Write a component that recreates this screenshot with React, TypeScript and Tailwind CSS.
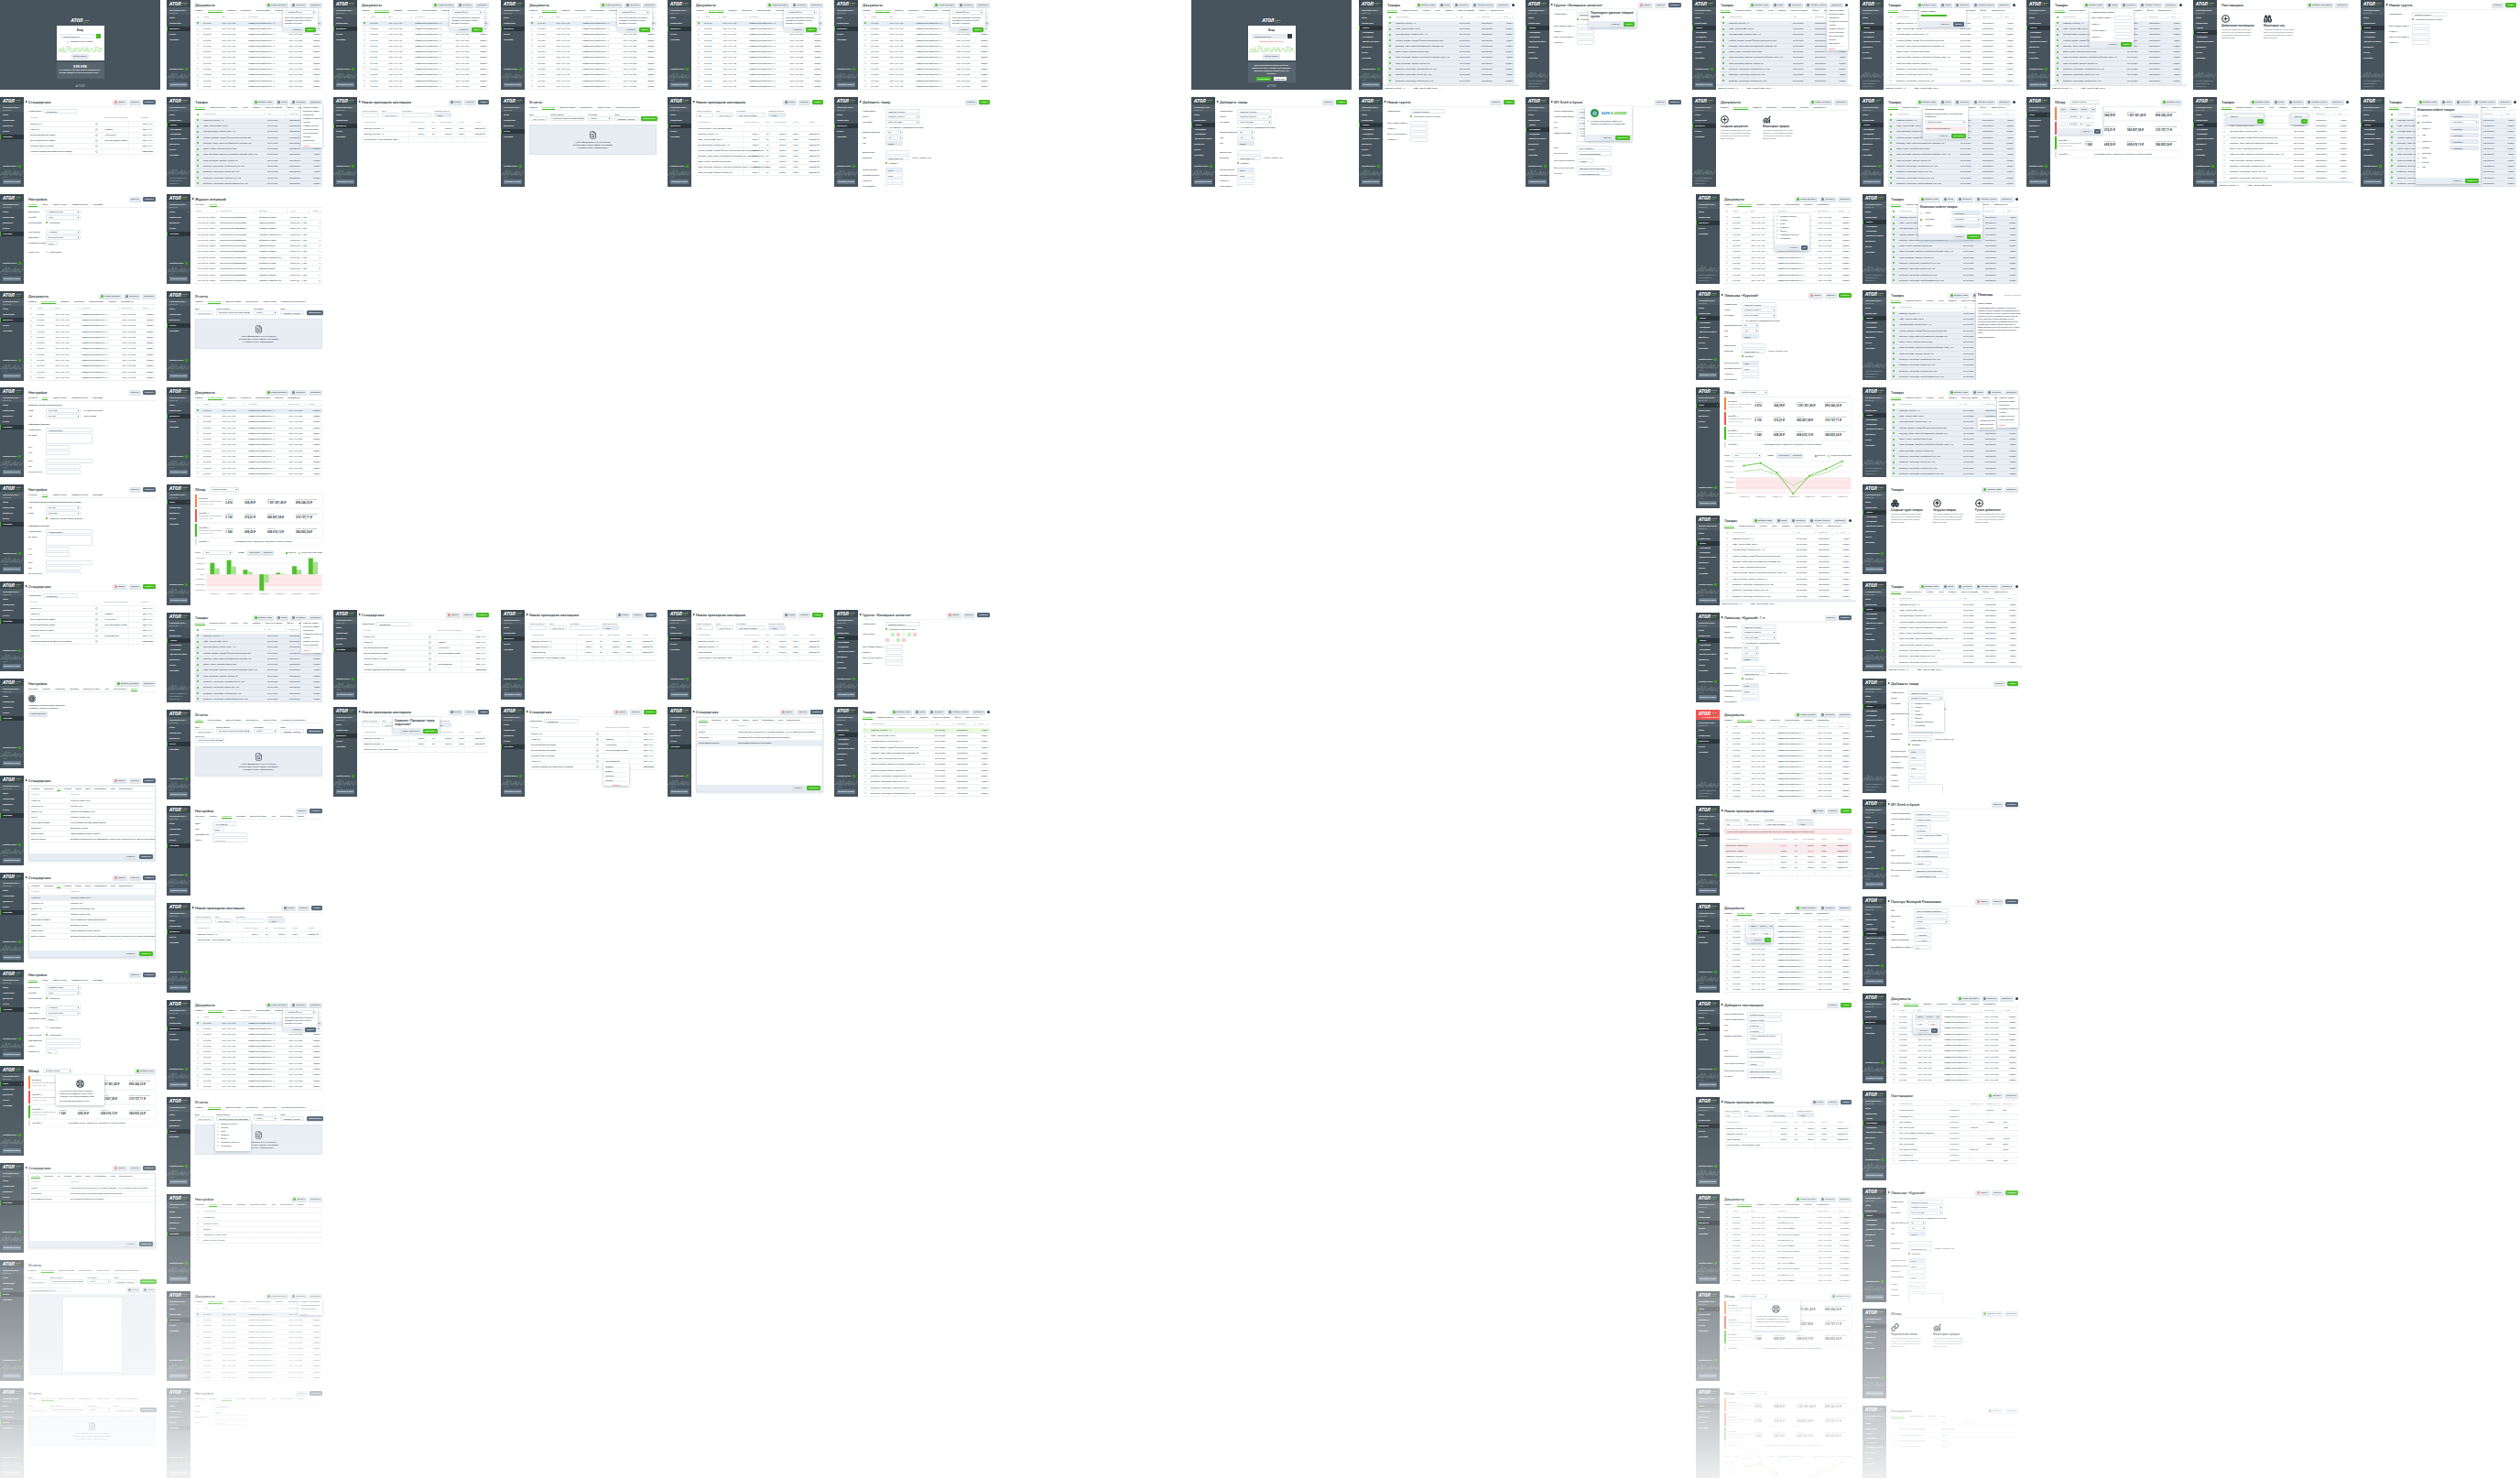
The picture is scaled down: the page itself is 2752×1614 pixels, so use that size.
import React from "react";
import { FileText, LifeBuoy, CirclePlus, CircleArrowUp, Boxes, Link, Binoculars, ChartNoAxesCombined, Copyright, Building2 } from "lucide-react";

type Kids = { children?: React.ReactNode };

/* ---------- small controls ---------- */

const btnKinds = {
  plain: "bg-[#eef2f6] text-[#34404a] border-[#dde4ea]",
  dark: "bg-[#566878] text-white border-[#566878]",
  green: "bg-[#43bd1f] text-white border-[#43bd1f]",
};

function Btn({ kind = "plain", dot, children, className = "" }: Kids & { kind?: keyof typeof btnKinds; dot?: string; className?: string }) {
  return (
    <button className={`flex h-[5px] shrink-0 items-center justify-center gap-px rounded-[1px] border px-px font-medium shadow-[0_1px_1px_#dde3e9] ${btnKinds[kind]} ${className}`}>
      {dot && <span className={`size-[3px] rounded-full ${dot}`} />}
      {children}
    </button>
  );
}

function Tick({ on, label }: { on?: boolean; label: string }) {
  return (
    <input
      type="checkbox"
      aria-label={label}
      defaultChecked={on}
      className="block size-[2px] shrink-0 appearance-none rounded-full bg-[#d3dae0] checked:bg-[#43bd1f]"
    />
  );
}

const box = "block h-[5px] rounded-[1px] border border-[#dfe6ed] px-[2px] text-[2px] leading-[3px] font-medium text-[#3f4a53]";

function Box({ v, label, w = "w-[38px]", k = "input" }: { v: string; label: string; w?: string; k?: string }) {
  if (k === "select")
    return (
      <span className={`relative block shrink-0 ${w}`}>
        <select aria-label={label} className={`${box} w-full appearance-none bg-white`}>
          <option>{v}</option>
        </select>
        <span className="pointer-events-none absolute top-[2px] right-[2px] size-px bg-[#56636e]" />
      </span>
    );
  if (k === "area")
    return <textarea aria-label={label} defaultValue={v} className={`${box} h-[12px] resize-none overflow-hidden ${w}`} />;
  if (k === "green") return <input aria-label={label} defaultValue={v} className={`${box} shrink-0 border-[#9fd98b] bg-[#f9fdf7] ${w}`} />;
  return <input aria-label={label} defaultValue={v} className={`${box} shrink-0 ${k === "off" ? "bg-[#e6edf3]" : "bg-white"} ${w}`} />;
}

function Popup({ className = "", children, footer }: Kids & { className?: string; footer?: React.ReactNode }) {
  return (
    <div className={`absolute z-10 flex flex-col bg-white shadow-[0_1px_3px_#aeb9c4] ${className}`}>
      <div className="flex grow flex-col gap-[2px] p-[2px]">{children}</div>
      {footer && <div className="flex h-[7px] shrink-0 items-center justify-end gap-[2px] bg-[#e9eef4] px-[2px]">{footer}</div>}
    </div>
  );
}

/* ---------- sidebar and shell ---------- */

function Logo() {
  return (
    <span className="flex items-center gap-px">
      <b className="text-[5px] leading-[5px] font-black text-white italic">АТОЛ</b>
      <span className="text-[2px] leading-[2px] text-[#c6ced4]">
        Frontol
        <br />
        <span className="font-bold text-[#43bd1f]">xPOS</span>
      </span>
    </span>
  );
}

const skyline = "M0 6h2v-1h1v-2h1v3h2V1h1v5h2V2l1-1 1 1v4h2V4h2v2h1V2h1v4h2V3h2v3h2l2-4";
const menu = ["Обзор", "Справочники", "Документы", "Отчеты", "Настройки"];
const submenu = ["Товары", "Поставщики", "Сотрудники", "Дисконтные карты"];

type Side = { active?: number; sub?: number; red?: boolean; foot?: boolean; user?: string; alert?: boolean };

function Sidebar({ active = 2, sub = -1, red, foot, user = "Константин Конст…", alert }: Side) {
  return (
    <aside className="flex w-[26px] shrink-0 flex-col overflow-hidden bg-[#47545d] text-[2px] text-white">
      <div className={`flex shrink-0 flex-col justify-center pl-[3px] ${red ? "h-[11px] bg-[#f25555]" : "h-[8px] bg-[#3e4a52]"}`}>
        <Logo />
        {red && <span className="pl-[4px]">Нет связи с кассой</span>}
      </div>
      <div className="h-[8px] shrink-0 bg-[#515e67] px-[3px] pt-[2px]">
        <p className="truncate font-bold">{user}</p>
        <p className="text-[#a9b4bc]">Директор</p>
      </div>
      <nav className="flex flex-col font-bold">
        {menu.map((m, i) => (
          <React.Fragment key={m}>
            <a
              href="#"
              className={`mt-px flex h-[5px] items-center justify-between border-l pr-[2px] pl-[2px] ${i === active && sub < 0 ? "border-[#43bd1f] bg-[#2c363d]" : "border-transparent"}`}
            >
              {m}
              {alert && i === 0 && <span className="size-px bg-[#ff6a3c]" />}
            </a>
            {i === 1 && sub >= 0 &&
              submenu.map((s, j) => (
                <a key={s} href="#" className={`flex h-[5px] items-center border-l pl-[3px] ${j === sub ? "border-[#43bd1f] bg-[#2c363d]" : "border-transparent"}`}>
                  {s}
                </a>
              ))}
          </React.Fragment>
        ))}
      </nav>
      <div className="mt-auto shrink-0">
        {!foot && (
          <a href="#" className="flex items-center justify-between px-[3px] font-bold">
            Перейти в кассу
            <span className="size-[3px] bg-[#2f9c1c]" />
          </a>
        )}
        <svg viewBox="0 0 26 7" className="mt-[2px] h-[7px] w-full" fill="none" stroke="#7c8992" strokeWidth=".6">
          <path d={skyline} />
        </svg>
        {foot ? (
          <p className="h-[13px] px-[3px] pt-[2px] text-[#a0acb4]">
            Служба поддержки
            <br />
            support@atol.ru
            <br />
            Версия 2.0.1
          </p>
        ) : (
          <>
            <p className="px-[3px] text-[#93a0a9]">v.2.0.1</p>
            <button className="mx-[3px] mt-px mb-[3px] block h-[5px] w-[20px] bg-[#67798a] text-white">Выгрузить в кассу</button>
          </>
        )}
      </div>
    </aside>
  );
}

type ShellProps = Kids & Side & { title: string; back?: boolean; actions?: React.ReactNode; lead?: React.ReactNode; tabs?: string[]; tab?: number; footer?: boolean };

function Shell({ title, back, actions, lead, tabs, tab = 0, footer, children, ...side }: ShellProps) {
  return (
    <>
      <Sidebar {...side} />
      <main className="flex min-w-0 grow flex-col overflow-hidden">
        <div className="flex grow flex-col overflow-hidden px-[5px]">
          <header className="relative flex h-[10px] shrink-0 items-center gap-[4px]">
            {back && <a href="#" aria-label="Назад" className="absolute -left-[3px] size-[2px] rotate-45 border-b border-l border-[#47535c]" />}
            <h2 className="text-[4px] leading-[5px] font-medium text-[#2b3740]">{title}</h2>
            {lead}
            <span className="ml-auto flex gap-[2px]">{actions}</span>
          </header>
          {tabs ? (
            <nav className="flex h-[5px] shrink-0 gap-[5px] border-b border-[#edf0f3]">
              {tabs.map((t, i) => (
                <a key={t} href="#" className={i === tab ? "border-b border-[#43bd1f] text-[#43bd1f]" : ""}>
                  {t}
                </a>
              ))}
            </nav>
          ) : (
            <div className="h-px shrink-0 bg-[#f1f3f5]" />
          )}
          {children}
        </div>
        {footer && (
          <footer className="flex h-[5px] shrink-0 items-center gap-[4px] border-t border-[#dfe5ea] px-[2px] shadow-[0_-1px_1px_#eef1f4]">
            <span>Лимонад «Курский» 1 л</span>
            <span>×</span>
            <span>Кофе «Черный Кофе» 250 гр</span>
            <span>×</span>
          </footer>
        )}
      </main>
    </>
  );
}

const plus = "bg-[#43bd1f]";
const grey = "bg-[#77848f]";
const red = "bg-[#f58a8a]";

const save = (label = "Сохранить", kind: "dark" | "green" = "dark", del = false) => (
  <>
    {del && <Btn dot={red}>Удалить</Btn>}
    <Btn>Отменить</Btn>
    <Btn kind={kind}>{label}</Btn>
  </>
);

/* ---------- list screens ---------- */

function HeadCells({ cols, mark }: { cols: [string, string][]; mark?: boolean }) {
  return (
    <thead>
      <tr className="h-[8px]">
        {mark !== undefined && (
          <th className="w-[8px] pl-[2px]">
            <Tick on={mark} label="Выбрать все" />
          </th>
        )}
        {cols.map(([c, w]) => (
          <th key={c} className={`p-0 pr-px font-normal text-[#8b959e] ${w}`}>
            <span className="flex justify-between border-b border-[#edf0f3] px-px">
              {c}
              <span>▾</span>
            </span>
          </th>
        ))}
      </tr>
    </thead>
  );
}

const docTabs = ["Продажи", "Приёмки товаров", "Возвраты", "Переоценка", "Инвентаризация", "Списания", "Перемещения"];
const docCols: [string, string][] = [["Номер", "w-[20px]"], ["Дата", "w-[29px]"], ["Контрагент", "w-[44px]"], ["Дата оплаты", "w-[22px]"], ["Сумма", ""]];

function Docs({ sel, varied, extra, children, ...side }: Kids & Side & { sel?: boolean; varied?: boolean; extra?: boolean }) {
  const names = ["ООО «Лента Мир Продукт»", "ИП Лавренко Б. Ю.", "ЗАО «Агро Комфорт»"];
  return (
    <Shell
      title="Документы"
      active={2}
      tabs={docTabs}
      tab={1}
      {...side}
      actions={
        <>
          <Btn dot={plus}>Создать документ</Btn>
          <Btn dot={grey}>Выгрузить</Btn>
          <Btn>Действия ▾</Btn>
          {extra && <span className="size-[3px] self-center rounded-full bg-[#34404a]" />}
        </>
      }
    >
      <table className="h-[83px] w-full table-fixed border-collapse text-left">
        <HeadCells mark={false} cols={docCols} />
        <tbody>
          {Array.from({ length: 12 }, (_, i) => (
            <tr key={i} className={`border-b border-[#eceff2] ${sel && i === 0 ? "bg-[#e7edf4]" : ""}`}>
              <td className="pl-[2px]">
                <Tick on={sel && i === 0} label={`Документ ${i + 1}`} />
              </td>
              <td className="pl-px">АТ10-001</td>
              <td className="pl-px">18.04.17 в 14:20</td>
              <td className="pl-px">{varied ? names[i % 3] : "Коммерческие маркетинг С. А."}</td>
              <td className="pl-px">18.04.17 в 15:00</td>
              <td className="pr-[2px] text-right font-bold">{varied ? "34 158,00 ₽" : i ? "100,00 ₽" : "1 100,00 ₽"}</td>
            </tr>
          ))}
        </tbody>
      </table>
      {children}
    </Shell>
  );
}

function DocsDelete({ kind = "green" }: { kind?: "green" | "dark" }) {
  return (
    <Docs sel>
      <Popup
        className="top-[9px] left-[127px] h-[23px] w-[38px]"
        footer={
          <>
            <Btn>Отменить</Btn>
            <Btn kind={kind}>Удалить</Btn>
          </>
        }
      >
        <Box v="Приёмка №АТ-01" label="Документ" w="w-full" k="select" />
        <p className="whitespace-normal">Если у вас в магазине несколько накладных, выберите нужный документ из списка</p>
      </Popup>
    </Docs>
  );
}

const goods = [
  "Лимонад «Курский» 1 л",
  "Кофе «Черный Кофе» 250 гр",
  "Тесто для пиццы «Молоко Село» 1 кг",
  "Колбаса «Дымов» Салями Финская полукопчёная 350г",
  "Шоколад «Чайка» молочный лимонный с орехами 120г",
  "Масло «Рапсо» Рапсовое горячее 800г",
  "Каша «Быстрова» Овсяная с клубникой и яблоком «Люкс» 15г",
  "Каша «Быстрова» Овсяная Черника 40г",
  "Биойогурт «ЖизньМед» натуральный 3,2% 125г",
  "Биойогурт «ЖизньМед» Персик 2,5% 125г",
  "Биойогурт «ЖизньМед» Клубника 2,5% 125г",
  "Биойогурт «ЖизньМед» Голубика-малина 2,5% 125г",
];
const goodTabs = ["Все группы", "Холодные напитки", "Колбасы", "Сыры", "Сладости", "Молочные изделия", "Фрукты", "Замороженные"];
const goodCols: [string, string][] = [["Наименование", "w-[70px]"], ["Код", "w-[24px]"], ["Штрихкод", "w-[24px]"], ["Цена", ""]];

function Goods({ all, first, many, footer, children, ...side }: Kids & Side & { all?: boolean; first?: boolean; many?: boolean; footer?: boolean }) {
  return (
    <Shell
      title="Товары"
      active={1}
      sub={0}
      tabs={goodTabs}
      footer={footer}
      {...side}
      actions={
        <>
          <Btn dot={plus}>Добавить товар</Btn>
          <Btn dot={grey}>Группа</Btn>
          <Btn dot={grey}>Выгрузить</Btn>
          {many && <Btn dot={grey}>Обновить остатки</Btn>}
          <Btn>Действия ▾</Btn>
          {many && <span className="size-[3px] self-center rounded-full bg-[#34404a]" />}
        </>
      }
    >
      <table className="h-[83px] w-full shrink-0 table-fixed border-collapse text-left">
        <HeadCells mark={!!all} cols={goodCols} />
        <tbody>
          {goods.map((g, i) => (
            <tr key={g} className={`border-b ${all ? "border-[#dce3ea] bg-[#e9eef5]" : "border-[#eceff2]"} ${first && i === 0 ? "bg-[#e8f9de]" : ""}`}>
              <td className="pl-[2px]">
                <Tick on={all} label={g} />
              </td>
              <td className="pl-px">{g}</td>
              <td className="pl-px">0013249983</td>
              <td className="pl-px">02579870721</td>
              <td className="pr-[2px] text-right font-bold">{i % 3 ? "175,00 ₽" : "75,00 ₽"}</td>
            </tr>
          ))}
        </tbody>
      </table>
      {children}
    </Shell>
  );
}

const longMenu = ["Изменить товары", "Выгрузить товары", "Переоценка", "Объединить карточки", "Экспорт", "Создать этикетки"];

function ActionMenu({ items, className, last = "Удалить" }: { items: string[]; className: string; last?: string }) {
  return (
    <div className={`absolute z-10 flex flex-col gap-[2px] bg-white p-[2px] shadow-[0_1px_3px_#aeb9c4] ${className}`}>
      {items.map((m) => (
        <a key={m} href="#" className="leading-[2px]">
          {m}
        </a>
      ))}
      {last && (
        <a href="#" className="mt-auto border-t border-[#eceff2] pt-px text-[#f25555]">
          {last}
        </a>
      )}
    </div>
  );
}

/* ---------- tables with bordered cells ---------- */

const stdTabs = ["Основные", "Налоговые", "Чек", "Позиция", "Оплата", "Смена", "Оборудование", "Касса", "Дополнительно"];

function Standard({ green, rows = 6, dropdown }: { green?: boolean; rows?: number; dropdown?: boolean }) {
  const names = ["Закрыть чек", "Новый чек", "Быстрое добавление товара", "Быстрое добавление товара", "Показать баланс на экране", "Новый чек"];
  const extra = ["", "Продажа", "НАСТРОЙКИ", "Штучная продажа товара", "", "Без параметров"];
  const list = [...names.slice(0, rows - 1), "Нажмите сюда для поиска функции из команды"];
  return (
    <Shell title="Стандартная" back active={4} actions={save("Сохранить", green ? "green" : "dark", true)}>
      <label className="mt-[2px] flex shrink-0 items-center gap-[2px]">
        Наименование
        <Box v="Стандартная" label="Наименование" w="w-[38px]" />
      </label>
      <table className="mt-[2px] w-full table-fixed border-collapse text-left">
        <thead>
          <tr className="h-[6px] text-[#8b959e]">
            <th className="w-[80px] pl-[2px] font-normal">Функция</th>
            <th className="w-[29px] pl-[3px] font-normal">Дополнительный параметр</th>
            <th className="pr-[8px] text-right font-normal">Клавиша</th>
          </tr>
        </thead>
        <tbody>
          {list.map((n, i) => (
            <tr key={i} className="h-[6px] border-y border-[#edf0f3]">
              <td className="border-r border-[#f2f4f6] pl-[2px]">
                <span className="flex items-center justify-between pr-[4px]">
                  {n}
                  <span className="size-[3px] rounded-full border border-[#b3bcc4]" />
                </span>
              </td>
              <td className="border-r border-[#f2f4f6] pl-[3px]">{i < rows - 1 ? extra[i] : ""}</td>
              <td className="pr-[3px] text-right font-bold">{i < rows - 1 ? "Shift + F12 ×" : "Комбинация"}</td>
            </tr>
          ))}
        </tbody>
      </table>
      {dropdown && (
        <Popup className="top-[62px] left-[112px] h-[24px] w-[28px]">
          {["Продажа", "Возврат", "Внесение", "Изъятие"].map((o) => (
            <span key={o} className="h-[3px] border-b border-[#eef1f3] leading-[2px]">
              {o}
            </span>
          ))}
          <span className="text-center leading-[2px] text-[#f25555]">Сбросить</span>
        </Popup>
      )}
    </Shell>
  );
}

function Picker({ green, tab = 2, rows, hi = -1 }: { green?: boolean; tab?: number; rows: [string, string][]; hi?: number }) {
  return (
    <Shell title="Стандартная" back active={4} actions={save("Сохранить", "dark", true)}>
      <section className="relative mb-[5px] flex grow flex-col border border-[#dde4ea] shadow-[0_1px_2px_#dbe2e8]">
        <nav className="flex h-[6px] items-end gap-[4px] border-b border-[#eef1f3] px-[2px]">
          {stdTabs.map((t, i) => (
            <a key={t} href="#" className={`h-[4px] ${i === tab ? "border-b border-[#43bd1f] text-[#43bd1f]" : ""}`}>
              {t}
            </a>
          ))}
          <button className="ml-auto h-[4px]" aria-label="Закрыть">
            ×
          </button>
        </nav>
        <table className="w-full table-fixed border-collapse text-left">
          <thead>
            <tr className="h-[6px] text-[#8b959e]">
              <th className="w-[43px] pl-[2px] font-normal">Функция</th>
              <th className="pl-[2px] font-normal">Описание</th>
            </tr>
          </thead>
          <tbody>
            {rows.map(([a, b], i) => (
              <tr key={a} className={`h-[6px] border-y border-[#edf0f3] ${i === hi ? "bg-[#e7edf4]" : ""}`}>
                <td className="pl-[2px]">{a}</td>
                <td className="pl-[2px]">{b}</td>
              </tr>
            ))}
          </tbody>
        </table>
        <div className="mt-auto flex h-[7px] items-center justify-end gap-[3px] bg-[#e7edf4] pr-[2px]">
          <Btn>Отменить</Btn>
          <Btn kind={green ? "green" : "dark"}>Применить</Btn>
        </div>
      </section>
    </Shell>
  );
}

const checkRows: [string, string][] = [
  ["Новый чек", "Открытие нового чека"],
  ["Отложить чек", "Отложить чек"],
  ["Закрыть чек", "Закрытие или возврат чека"],
  ["Расчет", "Перейти к оплате чека"],
  ["Расчет одной суммой", "Расчет суммой без кода подтверждения"],
  ["Ввод карты", "Ввод карты клиента"],
  ["Отмена карты", "Отмена введённой карты клиента"],
  ["Данные клиента", "Добавление дополнительной информации о клиенте или контрагенте в чек, данные организации"],
];
const mainRows: [string, string][] = [
  ["Отмена", "Отмена выбора, закрытие окна, «Основная команда» «Чек» из главного меню настройки"],
  ["Блокировка", "Блокировка рабочего места до ввода пароля пользователя"],
  ["Выход администратора", "Выход администратора из программы"],
];

function Invoice({ rows = 3, kind = "dark", error, long, children, filled }: Kids & { rows?: number; kind?: "dark" | "green"; error?: boolean; long?: boolean; filled?: boolean }) {
  const names = error
    ? ["Монастырь «Лимонный»", "Монастырь «Лимон»", "Лимонад «Курский» 1 л", "Лимонад «Курский» 1 л", "Новый лимонад"]
    : long
      ? goods.slice(0, 8).map((g) => g + (g.length > 45 ? ", газированный 0,33 л" : ""))
      : ["Лимонад «Курский» 1 л", "Лимонад «Курский» 1 л", "Новый лимонад"].slice(0, rows);
  const hint = "Начните писать, чтобы добавить товар";
  const list = long ? [hint, ...names] : [...names, hint];
  return (
    <Shell
      title="Новая приходная накладная"
      back
      active={2}
      actions={
        <>
          <Btn dot={grey}>В архив</Btn>
          {save("Создать", kind)}
        </>
      }
    >
      <div className="mt-[3px] flex shrink-0 gap-[3px] text-[#75818b]">
        <span>
          Номер накладной
          <Box v={filled ? "98" : ""} label="Номер накладной" w="w-[19px]" />
        </span>
        <span>
          Дата
          <Box v="12.04.17 в 12:00" label="Дата" w="w-[19px]" />
        </span>
        <span>
          Поставщик
          <Box v={filled ? "ООО «Мясо на гриле»" : ""} label="Поставщик" w="w-[32px]" />
        </span>
        <span>
          Сумма документа
          <Box v="1 500 ₽" label="Сумма документа" w="w-[19px]" k="off" />
        </span>
      </div>
      {error && (
        <p className="mt-[3px] flex h-[6px] shrink-0 items-center justify-between border border-[#f9d6d9] bg-[#fdeaec] px-[2px] text-[#5b4347]">
          Цена закупки одной или нескольких позиций выше розничной. Проверьте данные и исправьте цены
          <span className="text-[#f25555]">×</span>
        </p>
      )}
      <table className="mt-[3px] w-full table-fixed border-collapse text-right">
        <thead>
          <tr className="h-[6px] text-[#8b959e]">
            {["Наименование", "Закупочная цена", "НДС", "Цена продажи", "Кол-во", "Сумма"].map((h, i) => (
              <th key={h} className={`font-normal ${["w-[51px] pl-[2px] text-left", "w-[18px]", "w-[11px]", "w-[19px]", "w-[13px]", "pr-[9px]"][i]}`}>
                {h}
              </th>
            ))}
          </tr>
        </thead>
        <tbody>
          {list.map((n, i) => {
            const blank = n === hint;
            return (
              <tr key={i} className={`h-[6px] border-y border-[#edf0f3] ${error && i < 2 ? "bg-[#fdeaec]" : ""}`}>
                <td className="border-r border-[#f2f4f6] pl-[2px] text-left whitespace-nowrap">{n}</td>
                <td className={`border-r border-[#f2f4f6] ${error && i === 0 ? "text-[#f25555]" : ""}`}>{!blank && "60,00 ₽"}</td>
                <td className="border-r border-[#f2f4f6]">{!blank && "0%"}</td>
                <td className={`border-r border-[#f2f4f6] ${error && i === 1 ? "text-[#f25555]" : ""}`}>{!blank && "100,00 ₽"}</td>
                <td className="border-r border-[#f2f4f6]">{!blank && "20 шт"}</td>
                <td className="pr-[2px] font-bold">{!blank && "2 000,00 ₽ ✎ ×"}</td>
              </tr>
            );
          })}
        </tbody>
      </table>
      {children}
    </Shell>
  );
}

/* ---------- reports ---------- */

const repTabs = ["Продажи", "Остатки товара", "Движение товара", "Безнал/расчет", "Налоги и сборы", "Популярные/непопулярные"];

function Reports({ kind = "dark", two, dropdown, page }: { kind?: "dark" | "green"; two?: boolean; dropdown?: boolean; page?: boolean }) {
  return (
    <Shell title="Отчеты" active={3} tabs={repTabs} tab={two ? 0 : 1}>
      <div className="mt-[3px] flex shrink-0 items-end gap-[3px]">
        {[
          ["Дата", "12.04.17 в 15:40", "w-[20px]", "input"],
          ["Группа товаров", "Выберите группу или наименование", "w-[38px]", dropdown ? "green" : "select"],
          ["Поставщик", "Любой", "w-[26px]", "select"],
          ["Товар", "Например, «Молоко»", "w-[26px]", "input"],
        ].map(([l, v, w, k]) => (
          <span key={l}>
            {l}
            <Box v={v} label={l} w={w} k={k} />
          </span>
        ))}
        <Btn kind={kind} className="ml-auto">
          Сформировать
        </Btn>
      </div>
      {two && (
        <div className="mt-[2px] shrink-0">
          Тип отчета
          <Box v="Отчет по расчётам товаров" label="Тип отчета" w="w-[32px]" k="select" />
        </div>
      )}
      {page ? (
        <>
          <div className="mt-[4px] flex shrink-0 gap-[2px]">
            <Box v="Отчет по продажам 12.04.17" label="Отчет" w="w-[46px]" />
            <Btn dot={grey} className="ml-auto">
              Скачать
            </Btn>
            <Btn dot={grey}>Печать</Btn>
          </div>
          <div className="mt-[2px] mb-[6px] flex grow justify-center bg-[#e7edf2] py-[4px]">
            <div className="w-[64px] bg-white shadow-[0_0_2px_#cfd7de]" />
          </div>
        </>
      ) : (
        <div className="mt-[4px] flex h-[33px] shrink-0 flex-col items-center justify-center border border-[#dde4ec] bg-[#e8edf4] text-center">
          <FileText className="mb-[2px] size-[9px] text-[#47545d]" />
          <p>Чтобы сформировать отчет об остатках,</p>
          <p>выберите дату, группу товаров и поставщика</p>
          <p>и нажмите кнопку «Сформировать»</p>
        </div>
      )}
      {dropdown && (
        <Popup className="top-[26px] left-[53px] h-[33px] w-[39px]">
          {["Холодные напитки", "Колбасы", "Сыры", "Сладости", "Фрукты", "Корма для животных", "Канцелярия"].map((o) => (
            <label key={o} className="flex items-center gap-[2px] leading-[2px]">
              <Tick label={o} />
              {o}
            </label>
          ))}
        </Popup>
      )}
    </Shell>
  );
}

/* ---------- forms ---------- */

type Field = { l?: string; v?: string; k?: string; w?: string; mt?: string; after?: React.ReactNode };
const S = "w-[19px]";
const W = "w-[38px]";
const M = "w-[26px]";
const G = "mt-[5px]";

function Form({ fields, lw = "w-[19px]" }: { fields: Field[]; lw?: string }) {
  return (
    <form className="flex flex-col pt-px">
      {fields.map((f, i) => (
        <div key={i} className={`flex shrink-0 items-start ${f.mt ?? "mt-px"}`}>
          {f.k === "head" ? (
            <b className="text-[2px] leading-[5px]">{f.l}</b>
          ) : (
            <>
              <span className={`shrink-0 leading-[5px] ${lw}`}>{f.l}</span>
              {f.k === "none" ? null : f.k === "check" || f.k === "on" ? (
                <label className="flex h-[4px] items-center gap-[2px]">
                  <Tick on={f.k === "on"} label={f.v ?? ""} />
                  {f.v}
                </label>
              ) : (
                <Box v={f.v ?? ""} label={f.l || f.v || "Поле"} w={f.w ?? W} k={f.k} />
              )}
              {f.after && <span className={`flex h-[5px] items-center leading-[5px] ${f.k === "none" ? "gap-[2px]" : "ml-[3px] gap-[3px]"}`}>{f.after}</span>}
            </>
          )}
        </div>
      ))}
    </form>
  );
}

const setTabs = ["Основные", "Налоги", "Товары на кассе", "Параметры печати", "Программа"];
const setTabs2 = ["Мои кассы", "Сканеры", "Клавиатура", "Раскладка", "Дисконтные карты", "Чеки", "Рабочие места", "Дизайн"];

const settingsMain: Field[] = [
  { l: "Ваш магазин", v: "Продовольствие", k: "select" },
  { l: "Касса №1", v: "АТОЛ", k: "select" },
  { l: "Синхронизация", v: "Отображать", k: "on" },
  { l: "Роль кассира", v: "Не задана", k: "select", mt: G },
  { l: "Вид оплаты", v: "Без ограничений", k: "select" },
  { l: "Стандартная скидка", v: "0,00 %", w: "w-[13px]" },
  { l: "Печать чека", v: "Использовать", k: "check", mt: G },
];
const company: Field[] = [
  { l: "Информация о магазине", k: "head", mt: "mt-[4px]" },
  { l: "Наименование", v: "Название магаз.", w: "w-[51px]" },
  { l: "Юр. адрес", k: "area", w: "w-[51px]" },
  { l: "ИНН", w: M },
  { l: "КПП", w: M },
  { l: "Банк", w: "w-[51px]", mt: "mt-[4px]" },
  { l: "БИК", w: W },
  { l: "Расчетный счет", w: W },
];

function Settings({ tab = 0, tabs = setTabs, fields = settingsMain }: { tab?: number; tabs?: string[]; fields?: Field[] }) {
  return (
    <Shell title="Настройки" active={4} tabs={tabs} tab={tab} actions={save()}>
      <Form fields={fields} />
    </Shell>
  );
}
const taxA: Field[] = [
  { l: "Применять систему налогообложения", k: "head" },
  { l: "ЕНВД", v: "Без ЕНВД", k: "select", after: "Нет кода обеспечения" },
  { l: "НДС", v: "Без НДС", k: "select", after: "у всех товаров" },
  ...company,
];
const taxB: Field[] = [
  { l: "Налогообложение для свободной продажи и новых товаров", k: "head" },
  { l: "НДС", v: "Без НДС", k: "select" },
  { l: "ЕНВД", v: "Без ЕНВД", k: "select" },
  { l: "", v: "Применять систему налогообложения", k: "on" },
  ...company,
];
const network: Field[] = [
  { l: "Адрес", v: "192.168.88.98", w: M },
  { l: "Порт", v: "8080", w: "w-[13px]" },
  { l: "Идентификатор", v: "" },
  { l: "Пароль", v: "••••••••••••••••" },
];

const side = (t: string) => <span>{t}</span>;
const lemonade: Field[] = [
  { l: "Наименование", v: "Лимонад «Курский»" },
  { l: "Группа", v: "Холодные напитки", k: "select", after: side("+") },
  { l: "Тип товара", v: "Обычный товар", k: "select" },
  { l: "", v: "Это комплект и индивидуальный товар", k: "check" },
  { l: "Единица измерения", v: "ШТ", k: "select", w: S },
  { l: "НДС", v: "10%", k: "select", w: S },
  { l: "Код", v: "000001", k: "off", w: S },
  { l: "Вид алкоголя", v: "", w: M, mt: G },
  { l: "Штрихкод", v: "20000100001718", w: M, after: side("Кол-во 1,00 цена 1,00 ×") },
  { l: "", v: "Добавить", k: "on" },
  { l: "Закупочная цена", v: "60,00", k: "off", w: S, mt: "mt-[3px]" },
  { l: "Минимальная цена", v: "90,00", w: S },
  { l: "Наценка, %", v: "", w: S },
  { l: "Цена продажи", v: "75,00", w: S },
  { l: "Скидка", v: "%", w: S, mt: "mt-[3px]" },
  { l: "Остаток", v: "", w: S },
  { l: "Описание", v: "", k: "area" },
];
const group: Field[] = [
  { l: "Наименование", v: "Холодные напитки" },
  { l: "", v: "Показывать в списке на кассе", k: "on" },
  { l: "Макс. размер скидки, %", w: S, mt: "mt-[3px]" },
  { l: "Скидка, %", w: S },
  { l: "Макс. ручная скидка, %", w: S },
  { l: "Наценка, %", w: S },
];
const partner: Field[] = [
  { l: "Полное наименование", v: "ИП Хлеб и булки" },
  { l: "Краткое наименование", v: "ИП Хлеб и булки" },
  { l: "ИНН", v: "6449013711", w: S },
  { l: "КПП", v: "644901001", w: S },
  { l: "Юридический адрес", v: "413116, Саратовская область, Энгельс", k: "area" },
  { l: "Банк", v: "ОАО «Сбербанк»", mt: "mt-[4px]" },
  { l: "Расчетный счет", v: "40817810300000000000" },
  { l: "Срок отсрочки платежа", v: "10 дней", w: S, mt: "mt-[3px]" },
  { l: "ФИО контактного лица", v: "Дмитриев Сергей Валерьевич", mt: "mt-[3px]" },
  { l: "Эл. почта", v: "sv-dmitriev@gmail.com" },
];
const employee: Field[] = [
  { l: "ФИО", v: "Пальчук Валерий Романович" },
  { l: "Должность", v: "Кассир" },
  { l: "Роль", v: "Кассир", k: "select" },
  { l: "ИНН", v: "6449013711", w: S },
  { l: "Код авторизации", v: "1178906267", w: S, mt: "mt-[3px]" },
  { l: "Пароль авторизации", v: "1111122222", w: S },
  { l: "Максимальная скидка, %", v: "50", w: S, mt: "mt-[3px]" },
];
const swatches = (tones: string[]) => tones.map((c, i) => <span key={i} className={`size-[4px] ${c}`} />);

function Card({ title, fields, kind = "dark", label = "Сохранить", del, lw, sub = 0, active, children, foot }: Kids & { title: string; fields: Field[]; kind?: "dark" | "green"; label?: string; del?: boolean; lw?: string; sub?: number; active?: number; foot?: boolean }) {
  return (
    <Shell title={title} back active={active ?? 1} sub={sub} foot={foot} actions={save(label, kind, del)}>
      <Form fields={fields} lw={lw} />
      {children}
    </Shell>
  );
}

/* ---------- overview ---------- */

const points = [63, 118, 172, 226, 280, 334, 388];
const dark = [20, 11, 43, 112, 53, 31, 5];
const light = [38, 32, 50, 85, 56, 43, 17];

function Chart({ lines }: { lines?: boolean }) {
  return (
    <svg viewBox="0 0 417 130" className="h-[43px] w-full shrink-0">
      <rect x="36" y="58" width="381" height="40" fill="#fde8ea" />
      <rect x="36" y="98" width="381" height="14" fill="#fef6f7" />
      {[5, 22, 40, 58, 75, 93, 110].map((y, i) => (
        <g key={y}>
          <path d={`M36 ${y}H417`} stroke={i > 3 ? "#f8d3d7" : "#e6ebef"} strokeWidth="1.5" />
          <text x="32" y={y + 2} textAnchor="end" fontSize="6" fill="#7d8790">
            {i === 3 ? "0,00 ₽" : `${i > 3 ? "−" : ""}${Math.abs(3 - i) * 10} 000,00 ₽`}
          </text>
        </g>
      ))}
      {points.map((x, i) => (
        <g key={x}>
          {!lines && (
            <>
              <rect x={x - 15} y={Math.min(dark[i], 58)} width="15" height={Math.abs(58 - dark[i])} fill="#4fc22b" />
              <rect x={x} y={Math.min(light[i], 58)} width="16" height={Math.abs(58 - light[i])} fill="#a9e093" />
            </>
          )}
          {lines && <circle cx={x} cy={dark[i]} r="3" fill="#4fc22b" />}
          <text x={x} y="125" textAnchor="middle" fontSize="6" fill="#7d8790">
            {11 + i} марта, Пн
          </text>
        </g>
      ))}
      {lines && (
        <g fill="none" strokeWidth="2.5">
          <polyline stroke="#a9e093" points={points.map((x, i) => `${x},${light[i]}`).join(" ")} />
          <polyline stroke="#4fc22b" points={points.map((x, i) => `${x},${dark[i]}`).join(" ")} />
        </g>
      )}
    </svg>
  );
}

const cards = [
  ["Все кассы", "3 474", "368,29 ₽", "1 201 501,40 ₽", "894 246,32 ₽", "border-[#ff8340]"],
  ["Касса №1, у", "2 130", "274,21 ₽", "582 827,28 ₽", "310 727,71 ₽", "border-[#f25555]"],
  ["Касса №2, у", "1 340", "608,30 ₽", "608 674,12 ₽", "284 823,24 ₽", "border-[#43bd1f]"],
];

function Overview({ chart, modal, dates }: { chart?: "bars" | "lines"; modal?: boolean; dates?: boolean }) {
  return (
    <Shell
      title="Обзор"
      active={0}
      alert
      lead={<Box v="Выбрать период" label="Период" w="w-[32px]" k={dates ? "green" : "select"} />}
      actions={!chart && <Btn dot={plus}>Добавить кассу</Btn>}
    >
      {cards.map(([n, a, b, c, d, tone]) => (
        <section key={n} className={`mb-[2px] flex h-[14px] shrink-0 items-center border-l-2 shadow-[0_0_2px_#e2e7ec] ${tone}`}>
          <div className="w-[31px] pl-[2px]">
            <b>{n}</b>
            <p className="text-[#8b959e]">Последняя синхронизация</p>
            <p className="text-[#8b959e]">12.05.17 в 14:20</p>
          </div>
          {[
            ["Продажи", a, "w-[21px]"],
            ["Средний чек", b, "w-[25px]"],
            ["Выручка", c, "w-[31px]"],
            ["В том числе наличными", d, "w-[28px]"],
          ].map(([l, v, w]) => (
            <div key={l} className={w}>
              <p className="text-[#8b959e]">{l}</p>
              <p className="text-[3px] leading-[4px] font-bold text-[#2f3b44]">{v}</p>
            </div>
          ))}
        </section>
      ))}
      <section className="flex h-[7px] shrink-0 items-center gap-[28px] border-l-2 border-[#dfe5ea] pl-[2px] shadow-[0_0_2px_#e2e7ec]">
        <span>Касса №3, у</span>
        <span>Необходимо нажать «подключить» для работы с кассой и сайтом</span>
      </section>
      {chart && (
        <>
          <div className="mt-[6px] mb-[2px] flex shrink-0 items-center gap-[3px]">
            Кассы
            <Box v="Все" label="Кассы" w="w-[32px]" k="select" />
            <span className="ml-[3px]">График</span>
            <span className="flex">
              <Btn>Столбчатый</Btn>
              <Btn>Линейный</Btn>
            </span>
            <span className="ml-auto flex items-center gap-px">
              <span className="size-[2px] bg-[#4fc22b]" />
              Выручка
              <span className="ml-[2px] size-[2px] bg-[#a9e093]" />В том числе наличными
            </span>
          </div>
          <Chart lines={chart === "lines"} />
        </>
      )}
      {modal && (
        <Popup className="top-[10px] left-[61px] h-[33px] w-[53px]">
          <LifeBuoy strokeWidth={3} className="mx-auto mt-[3px] size-[9px] shrink-0 text-[#2f3b44]" />
          <p className="px-[2px] whitespace-normal">
            Не получается найти ответ в справке? Обратитесь в поддержку через кнопку «Помощь» или заполните форму онлайн.
          </p>
          <p className="px-[2px]">Мы ответим вам по адресу почты</p>
        </Popup>
      )}
      {dates && (
        <Popup className="top-[9px] left-[34px] h-[31px] w-[49px]" footer={save("ОК")}>
          <div className="flex gap-px">
            {["День", "Неделя", "Месяц", "Год"].map((d) => (
              <Btn key={d}>{d}</Btn>
            ))}
          </div>
          {[1, 2].map((d) => (
            <div key={d} className="mt-px flex gap-px">
              <Box v="12" label={`День ${d}`} w="w-[7px]" />
              <Box v="сентябрь" label={`Месяц ${d}`} w="w-[18px]" k="select" />
              <Box v="2017" label={`Год ${d}`} w="w-[10px]" />
            </div>
          ))}
        </Popup>
      )}
    </Shell>
  );
}

/* ---------- empty states ---------- */

function Empty({ title, tabs, items, active, sub, foot, add = "Добавить кассу" }: { title: string; tabs?: string[]; items: [React.ElementType, string][]; active: number; sub?: number; foot?: boolean; add?: string }) {
  return (
    <Shell title={title} tabs={tabs} tab={1} active={active} sub={sub} foot={foot} actions={<><Btn dot={plus}>{add}</Btn><Btn>Действия ▾</Btn></>}>
      <div className="mt-[5px] flex gap-[11px]">
        {items.map(([Icon, t]) => (
          <article key={t} className="w-[35px]">
            <Icon strokeWidth={3} className="size-[9px] text-[#2b3740]" />
            <h3 className="mt-[2px] text-[3px] leading-[3px] font-bold">{t}</h3>
            <p className="mt-px whitespace-normal text-[#75818b]">
              Настройте параметры работы для удобного учета, добавьте позиции из списка или загрузите готовый файл в систему
            </p>
          </article>
        ))}
      </div>
    </Shell>
  );
}

function Plain({ title, rows, cols, active, sub, tabs, tab }: { title: string; rows: string[][]; cols: [string, string][]; active: number; sub?: number; tabs?: string[]; tab?: number }) {
  return (
    <Shell title={title} active={active} sub={sub} tabs={tabs} tab={tab} actions={<><Btn dot={plus}>Добавить</Btn><Btn>Действия ▾</Btn></>}>
      <table className="w-full table-fixed border-collapse text-left">
        <HeadCells mark={false} cols={cols} />
        <tbody>
          {rows.map((r, i) => (
            <tr key={i} className="h-[6px] border-b border-[#eceff2]">
              <td className="pl-[2px]">
                <Tick label={r[0]} />
              </td>
              {r.map((c, j) => (
                <td key={j} className="pl-px">
                  {c}
                </td>
              ))}
            </tr>
          ))}
        </tbody>
      </table>
    </Shell>
  );
}

function Journal() {
  const who = ["Тихонов Сергей Владимирович", "Константинов Константинович"];
  const what = ["Добавление товара", "Удаление позиции", "Операция «Возврат»", "Операция «Товарный чек»"];
  return (
    <Shell title="Журнал операций" back active={4} alert tabs={["Учет кассы", "События"]} tab={1}>
      <table className="h-[84px] w-full table-fixed border-collapse text-left">
        <HeadCells cols={[["Время", "w-[26px]"], ["Пользователь", "w-[43px]"], ["Действие", "w-[34px]"], ["Касса", "w-[24px]"], ["Номер", ""]]} />
        <tbody>
          {Array.from({ length: 12 }, (_, i) => (
            <tr key={i} className="border-b border-[#eceff2]">
              <td className="pl-[2px]">12.04.2016 в 13:28:07</td>
              <td className="pl-px">{who[i % 2]}</td>
              <td className="pl-px">{what[i % 4]}</td>
              <td className="pl-px">KASSA_001_1-1286</td>
              <td className="pr-[2px] text-right">{i + 1}</td>
            </tr>
          ))}
        </tbody>
      </table>
    </Shell>
  );
}

/* ---------- login ---------- */

function Login({ error }: { error?: boolean }) {
  return (
    <main className="flex grow flex-col items-center bg-[#47545d] pt-[20px]">
      <Logo />
      <form className="mt-[3px] flex h-[38px] w-[52px] shrink-0 flex-col items-center bg-white px-[4px] pt-[4px]">
        <h2 className="text-[3px] leading-[3px] font-bold">Вход</h2>
        <div className="mt-[2px] flex w-full justify-between">
          <Box v="Электронная почта" label="Электронная почта" w="w-[38px]" k={error ? "off" : "input"} />
          <button aria-label="Войти" className={`size-[5px] ${error ? "bg-[#34404a]" : "bg-[#43bd1f]"}`} />
        </div>
        {error ? (
          <p className="mt-[2px] text-[#f25555]">Неверный адрес или пароль</p>
        ) : (
          <label className="mt-[2px] flex items-center gap-[2px]">
            <Tick label="Запомнить" />
            Запомнить логин и пароль
          </label>
        )}
        <svg viewBox="0 0 50 6" className="mt-[3px] h-[7px] w-[50px] shrink-0" fill="none" stroke="#8fd97a" strokeWidth=".6">
          <path d="M0 6h2V3h2v3h2V1l1 2v3h3V0h2v1h2v5h3V3h2v3h1V2h3v4h2l2-5 2 5h1V2h3v4h2l2-4 2 4h2V1h3v5h2V3h2v3M3 4h1M11 3h3M24 4h2M30 4h4M41 4h2M46 2h2" />
        </svg>
        <Btn className="mt-[2px]">Забыли пароль?</Btn>
      </form>
      <section className={`mt-[2px] flex w-[52px] shrink-0 flex-col items-center bg-[#58656e] px-[3px] py-[2px] text-center text-white ${error ? "h-[22px]" : "h-[18px]"}`}>
        {error ? (
          <>
            <p className="whitespace-normal">Для использования сервиса требуется подключить кассу. Пройдите регистрацию и заполните параметры вашей кассы, это бесплатно.</p>
            <div className="mt-auto flex gap-[3px]">
              <button className="h-[4px] bg-[#43bd1f] px-[2px]">Регистрация</button>
              <button className="h-[4px] bg-white px-[2px] text-[#34404a]">Демо-вход</button>
            </div>
          </>
        ) : (
          <>
            <b className="text-[4px] leading-[5px]">590 098</b>
            <p className="text-left whitespace-normal">Это защищённый номер вашего предприятия в системе. Введите его при регистрации кассы</p>
          </>
        )}
      </section>
      <span className="mt-auto mb-[2px] text-[4px] leading-[4px] text-[#9eabb4] italic">АТОЛ</span>
    </main>
  );
}

const filterBox = (
  <>
    {["Холодные напитки", "Колбасы", "Сыры", "Сладости", "Фрукты", "Корма для животных", "Канцелярия"].map((o) => (
      <label key={o} className="flex items-center gap-[2px] leading-[2px]">
        <Tick label={o} />
        {o}
      </label>
    ))}
  </>
);

const props = ["Группа", "Тип товара", "Скидка, %", "НДС", "Наценка, %", "Единица", "Штрихкод", "Цена", "Остаток", "Код"];
function PropsPopup({ n, className }: { n: number; className: string }) {
  return (
    <Popup className={className} footer={save("Применить", "green")}>
      <h3 className="text-[3px] leading-[4px] font-bold">Изменение свойств товаров</h3>
      {props.slice(0, n).map((p, i) => (
        <label key={p} className="flex items-center gap-[3px]">
          <Tick on={i === 1} label={p} />
          <span className="grow">{p}</span>
          {i < 6 && <Box v="Не выбрано" label={p} w="w-[32px]" k={i === 1 ? "select" : "off"} />}
        </label>
      ))}
    </Popup>
  );
}

const datePopup = (className: string, kind: "dark" | "green") => (
  <Popup
    className={className}
    footer={
      <>
        <Btn>Очистить</Btn>
        <Btn kind={kind}>ОК</Btn>
      </>
    }
  >
    <div className="flex">
      <Btn>Неделя</Btn>
      <Btn>Месяц</Btn>
      <Btn>Год</Btn>
    </div>
    <div className="flex justify-between">
      <Box v="12.04.17" label="С даты" w="w-[11px]" />
      <Box v="12.05.17" label="По дату" w="w-[11px]" />
    </div>
  </Popup>
);

const supplierRows = [
  ["ИП Хлеб и Булки", "6449013711", "—", "5 000,00", "5 дн"],
  ["ИП Петров А. М.", "6449013711", "—", "—", "—"],
  ["ООО «Продукт»", "6449013711", "—", "12 000,00", "10 дн"],
  ["ООО «Юнит-Стар»", "6449013711", "10 000,00", "—", "1 день"],
  ["ООО «ТоргКомфорт-Товарная компания»", "6449013711", "—", "—", "—"],
  ["ООО «Курье Продукт»", "6449013711", "—", "12 500,00", "12 дней"],
  ["ООО «Мясо-море»", "6449013711", "—", "500,00", "8 дней"],
  ["ООО «Дача и хлебцы»", "6449013711", "50 000,00", "—", "0 дней"],
  ["ИП Чернов В. М.", "6449013711", "—", "—", "—"],
  ["ИП Воротынский И. О.", "6449013711", "—", "3 000,00", "1 день"],
];

const goodsMenu = <ActionMenu className="top-[8px] left-[147px] h-[47px] w-[23px]" items={[...longMenu, "Печать ценников", "Штучный режим", "Ценники", "Вид таблицы"]} />;

/* ---------- board: every screen keeps its own place on the canvas ---------- */

const H = 98;
const boards: [number, number, number, React.ReactNode][] = [
  [0, 0, H, <Login />],
  ...[182, 364, 547, 729, 911].map((x): [number, number, number, React.ReactNode] => [x, 0, H, <DocsDelete />]),
  [0, 106, H, <Standard />],
  [0, 212, H, <Settings />],
  [0, 318, H, <Docs />],
  [0, 423, H, <Settings tab={1} fields={taxA} />],
  [0, 529, H, <Settings tab={1} fields={taxB} />],
  [0, 635, H, <Standard green rows={7} />],
  [
    0, 741, H,
    <Shell title="Настройки" active={4} tabs={setTabs2} tab={7} actions={<><Btn dot={plus}>Добавить раскладку</Btn><Btn>Действия ▾</Btn></>}>
      <Copyright className="mt-[3px] size-[8px] shrink-0 rounded-full bg-[#34404a] text-white" />
      <p className="mt-[2px]">Произведите проверку вашей клавиатуры</p>
      <p>с помощью «Мастера» и проверки</p>
      <Btn className="mt-[2px] self-start">Открыть мастера</Btn>
    </Shell>,
  ],
  [0, 847, H, <Picker rows={checkRows} />],
  [0, 953, H, <Picker green hi={0} rows={checkRows} />],
  [
    0, 1059, H,
    <Settings
      fields={[...settingsMain, { l: "Связь с кассой", v: "Использовать", k: "on", mt: "mt-[3px]" }, { l: "Идентификатор" }, { l: "Пароль" }, { l: "Таймаут, сек", v: "30", w: "w-[13px]" }]}
    />,
  ],
  [0, 1164, H, <Overview modal />],
  [0, 1270, H, <Picker tab={0} rows={mainRows} />],
  [0, 1376, 132, <Reports kind="green" page />],
  [0, 1516, H, <Reports />],

  [182, 106, H, <Goods all foot>{goodsMenu}</Goods>],
  [182, 212, H, <Journal />],
  [182, 318, H, <Reports />],
  [182, 423, H, <Docs sel />],
  [182, 529, 132, <Overview chart="bars" />],
  [182, 669, H, <Goods all foot><ActionMenu className="top-[8px] left-[147px] h-[36px] w-[23px]" items={[...longMenu, "Печать ценников"]} /></Goods>],
  [182, 775, H, <Reports two />],
  [182, 880, H, <Settings tabs={setTabs2} tab={2} fields={network} />],
  [182, 986, H, <Invoice rows={1} />],
  [182, 1092, H, <DocsDelete kind="dark" />],
  [182, 1198, H, <Reports dropdown />],
  [
    182, 1304, H,
    <Plain
      title="Настройки"
      active={4}
      tabs={setTabs2}
      tab={1}
      cols={[["Наименование", ""]]}
      rows={[["Стандартная"], ["Honeywell 3Q-MS"], ["Datalogic"], ["Клавиатура «Новый стиль»"], ["Штрих-сканеры базовые"]]}
    />,
  ],
  [182, 1410, H, <Docs sel><ActionMenu className="top-[8px] left-[144px] h-[18px] w-[26px]" items={["Создать на основании", "Скопировать документ", "Печать документа"]} /></Docs>],
  [182, 1516, H, <Settings tabs={setTabs2} tab={2} fields={network} />],

  [364, 106, H, <Invoice rows={2} />],
  [547, 106, H, <Reports kind="green" />],
  [729, 106, H, <Invoice long kind="green" filled />],
  [911, 106, H, <Card title="Добавить товар" active={2} sub={-1} fields={lemonade} kind="green" label="Создать" lw="w-[25px]" />],
  [364, 666, H, <Standard green rows={7} />],
  [547, 666, H, <Invoice />],
  [729, 666, H, <Invoice kind="green" filled />],
  [
    911, 666, H,
    <Card
      title="Группа «Холодные напитки»"
      del
      lw="w-[25px]"
      fields={[
        ...group.slice(0, 2),
        { l: "Цвет на кассе", k: "none", after: swatches(["bg-white", "bg-[#c9efbd]", "bg-[#fbcdd1]", "bg-[#eef8ea]", "bg-[#c9efbd]", "bg-[#fbcdd1]"]) },
        { l: "", k: "none", after: swatches(["bg-[#fbcdd1]", "bg-[#f7f8f9]", "bg-[#c9efbd]", "bg-[#fbcdd1]"]) },
        ...group.slice(2),
      ]}
    />,
  ],
  [
    364, 772, H,
    <Invoice rows={2}>
      <Popup
        className="top-[11px] left-[65px] h-[17px] w-[51px]"
        footer={
          <>
            <Btn>Назад к изменению</Btn>
            <Btn kind="green">Подтвердить</Btn>
          </>
        }
      >
        <b className="text-[3px] leading-[4px] whitespace-normal">Сохранить «Приходная» перед закрытием?</b>
      </Popup>
    </Invoice>,
  ],
  [547, 772, H, <Standard green rows={7} dropdown />],
  [729, 772, H, <Picker green tab={0} hi={2} rows={mainRows} />],
  [911, 772, H, <Goods first many />],

  [1301, 0, H, <Login error />],
  [1484, 0, H, <Goods all many footer />],
  [
    1666, 0, H,
    <Card title="Группа «Холодные напитки»" del foot fields={group} lw="w-[25px]">
      <Popup className="top-[10px] left-[69px] h-[20px] w-[52px]" footer={save("Удалить", "green")}>
        <b className="text-[3px] leading-[4px] whitespace-normal">Подтвердите удаление товарной группы</b>
      </Popup>
    </Card>,
  ],
  [1848, 0, H, <Goods all many footer>{goodsMenu}</Goods>],
  [
    2031, 0, H,
    <Goods many footer foot>
      <Popup className="top-[9px] left-[65px] h-[21px] w-[51px]" footer={save("Закрыть")}>
        <b>Импорт товаров…</b>
        <span className="h-[2px] w-[28px] bg-[#43bd1f]" />
      </Popup>
    </Goods>,
  ],
  [
    2213, 0, H,
    <Goods all many footer>
      <Popup className="top-[10px] left-[69px] h-[40px] w-[48px]" footer={save("Создать", "green")}>
        <b className="leading-[3px]">Создание группы товаров</b>
        {["Макс. размер скидки, %", "Скидка, %", "Ручная скидка, %", "Наценка, %"].map((l) => (
          <label key={l} className="flex items-center justify-between">
            {l}
            <Box v="" label={l} w={S} />
          </label>
        ))}
      </Popup>
    </Goods>,
  ],
  [2395, 0, H, <Empty title="Поставщики" active={1} sub={1} foot add="Добавить поставщика" items={[[CirclePlus, "Добавление поставщика"], [Binoculars, "Мониторинг цен"]]} />],
  [2578, 0, H, <Card title="Новая группа" foot fields={group} kind="green" label="Создать" lw="w-[25px]" />],

  [1301, 106, H, <Card title="Добавить товар" fields={lemonade} kind="green" label="Создать" />],
  [1484, 106, H, <Card title="Новая группа" fields={group} kind="green" label="Создать" lw="w-[25px]" />],
  [
    1666, 106, H,
    <Card title="ИП Хлеб и булки" fields={partner} sub={1} lw="w-[25px]">
      <Popup className="top-[10px] left-[65px] h-[38px] w-[51px]" footer={save("Подключить", "green")}>
        <div className="mt-px flex items-center justify-center gap-[3px]">
          <span className="flex size-[9px] items-center justify-center rounded-full bg-[#2b9a3c]">
            <Building2 className="size-[5px] rounded-full bg-[#1d83c8] text-white" />
          </span>
          <b className="text-[4px] leading-[5px] text-[#1b91d0]">
            SAFE <span className="text-[#43bd1f]">&amp; GOODS</span>
          </b>
        </div>
        <label className="mt-px flex gap-[2px] whitespace-normal">
          <Tick label="Согласие" />
          Согласен использовать сервис и его условия. Ознакомиться с соглашением
        </label>
      </Popup>
    </Card>,
  ],
  [1848, 106, H, <Empty title="Документы" active={2} foot tabs={docTabs} add="Создать документ" items={[[CirclePlus, "Создание документа"], [ChartNoAxesCombined, "Мониторинг продаж"]]} />],
  [
    2031, 106, H,
    <Goods all many>
      <Popup className="top-[10px] left-[69px] h-[35px] w-[49px]" footer={save("Объединить", "green")}>
        <b>Объединение товаров</b>
        <p className="whitespace-normal">Выберите основной товар, с которым будет объединение</p>
        <Box v="Выберите товар" label="Основной товар" w="w-full" k="select" />
        <p className="bg-[#fdeaec] p-px">Товары нельзя разъединить</p>
      </Popup>
    </Goods>,
  ],
  [2213, 106, H, <Overview dates />],
  [
    2395, 106, H,
    <Goods many footer>
      {["left-[36px] w-[42px]", "left-[106px] w-[20px]"].map((p) => (
        <div key={p} className={`absolute top-[17px] z-10 flex h-[13px] flex-col justify-between bg-[#e9eef4] p-px shadow-[0_1px_2px_#9eabb6] ${p}`}>
          <Box v="Лимонад" label="Фильтр" w="w-full" k="green" />
          <Btn kind="green" className="self-end">
            ОК
          </Btn>
        </div>
      ))}
    </Goods>,
  ],
  [2578, 106, H, <Goods all many><PropsPopup n={10} className="top-[10px] left-[60px] h-[85px] w-[71px]" /></Goods>],

  [
    1852, 212, H,
    <Docs foot>
      <Popup
        className="top-[21px] left-[86px] h-[41px] w-[38px]"
        footer={
          <>
            <Btn>Очистить</Btn>
            <Btn kind="dark">ОК</Btn>
          </>
        }
      >
        {filterBox}
      </Popup>
    </Docs>,
  ],
  [1852, 317, H, <Card title="Лимонад «Курский»" fields={lemonade} kind="green" del />],
  [1852, 423, 132, <Overview chart="lines" />],
  [1852, 563, H, <Goods many footer user="Виктор Севастьянов" />],
  [1852, 669, H, <Card title="Лимонад «Курский» 1 л" fields={lemonade} />],
  [1852, 775, H, <Docs red foot />],
  [1852, 880, H, <Invoice error kind="green" filled />],
  [1852, 986, H, <Docs>{datePopup("top-[21px] left-[55px] h-[23px] w-[29px]", "green")}</Docs>],
  [1852, 1092, H, <Card title="Добавить поставщика" active={2} sub={-1} fields={partner} kind="green" label="Создать" lw="w-[25px]" />],
  [1852, 1198, H, <Invoice filled />],
  [1852, 1304, H, <Docs varied />],
  [1852, 1410, H, <Overview modal />],
  [1852, 1516, 132, <Overview chart="lines" />],

  [2034, 212, H, <Goods all many foot><PropsPopup n={3} className="top-[10px] left-[61px] h-[40px] w-[70px]" /></Goods>],
  [
    2034, 317, H,
    <Goods all foot>
      <Popup className="top-0 left-[124px] h-[98px] w-[51px]">
        <div className="flex items-center justify-between">
          <b className="text-[4px] leading-[6px]">Помощь</b>
          <span className="text-[#8b959e]">Закрыть подсказку</span>
        </div>
        <p className="mt-[3px] font-bold">Группы товаров</p>
        <p className="whitespace-normal">
          В этом разделе можно увидеть список всех товаров, которые продаются в вашем магазине, а также изменить их цену, остатки и группу. Если выбрать несколько товаров в списке, для них
          станут доступны общие действия: печать ценников, переоценка, перемещение в группу или удаление. Товары можно загрузить из файла, добавить вручную или получить с кассы. Изменения
          вступят в силу после выгрузки в кассу.
        </p>
        <a href="#">Следующий вопрос →</a>
      </Popup>
    </Goods>,
  ],
  [
    2034, 423, H,
    <Goods all foot>
      <ActionMenu className="top-[8px] left-[147px] h-[36px] w-[23px]" items={[...longMenu, "Печать ценников"]} />
      <ActionMenu className="top-[33px] left-[126px] h-[13px] w-[20px]" items={["Большие ценники", "Малые ценники", "Штучная печать"]} last="" />
    </Goods>,
  ],
  [2034, 529, H, <Empty title="Товары" active={1} sub={0} add="Добавить товар" items={[[Boxes, "Создание групп товаров"], [CircleArrowUp, "Загрузка товаров"], [CirclePlus, "Ручное добавление"]]} />],
  [2034, 635, H, <Goods many footer />],
  [
    2034, 741, 125,
    <Card title="Добавить товар" foot fields={lemonade} kind="green" label="Создать">
      <Popup className="top-[24px] left-[51px] h-[34px] w-[38px]">{filterBox}</Popup>
    </Card>,
  ],
  [2034, 873, H, <Card title="ИП Хлеб и булки" sub={1} fields={partner} lw="w-[25px]" />],
  [2034, 979, H, <Card title="Пальчук Валерий Романович" del sub={2} fields={employee} lw="w-[25px]" />],
  [2034, 1085, H, <Docs extra>{datePopup("top-[21px] left-[55px] h-[23px] w-[29px]", "dark")}</Docs>],
  [
    2034, 1191, H,
    <Plain
      title="Поставщики"
      active={1}
      sub={1}
      cols={[["Наименование", "w-[55px]"], ["ИНН", "w-[22px]"], ["Мы должны", "w-[18px]"], ["Нам должны", "w-[18px]"], ["Просрочка", ""]]}
      rows={supplierRows}
    />,
  ],
  [2034, 1297, 125, <Card title="Лимонад «Курский»" del fields={lemonade} kind="green" />],
  [2034, 1429, H, <Empty title="Обзор" active={0} items={[[Link, "Подключение кассы"], [ChartNoAxesCombined, "Мониторинг продаж"]]} />],
  [
    2034, 1535, H,
    <Plain
      title="Сотрудники"
      active={1}
      sub={2}
      tabs={["Все сотрудники", "Администраторы", "Кассиры", "Роли"]}
      cols={[["ФИО", "w-[46px]"], ["Роль", "w-[24px]"], ["Должность", ""]]}
      rows={[["Тихонов Сергей Владимирович", "Администратор", ""], ["Пальчук Валерий Романович", "Кассир", ""], ["Севастьянов Виктор Петрович", "Кассир", ""], ["Константинов Алексей", "Кассир", ""]]}
    />,
  ],
];

export default function App() {
  return (
    <div className="relative h-screen w-full overflow-hidden bg-white font-[Roboto,sans-serif] text-[2px] leading-[3px] font-medium text-[#3f4b54]">
      {boards.map(([left, top, height, screen], i) => (
        <div key={i} className="absolute flex w-[175px] overflow-hidden bg-white whitespace-nowrap" style={{ left, top, height }}>
          {screen}
        </div>
      ))}
      <div className="pointer-events-none absolute inset-0 z-20 bg-[linear-gradient(to_bottom,transparent_72%,rgba(255,255,255,0.12)_80%,rgba(255,255,255,0.32)_87%,rgba(255,255,255,0.6)_94%,rgba(255,255,255,0.9)_100%)]" />
    </div>
  );
}
